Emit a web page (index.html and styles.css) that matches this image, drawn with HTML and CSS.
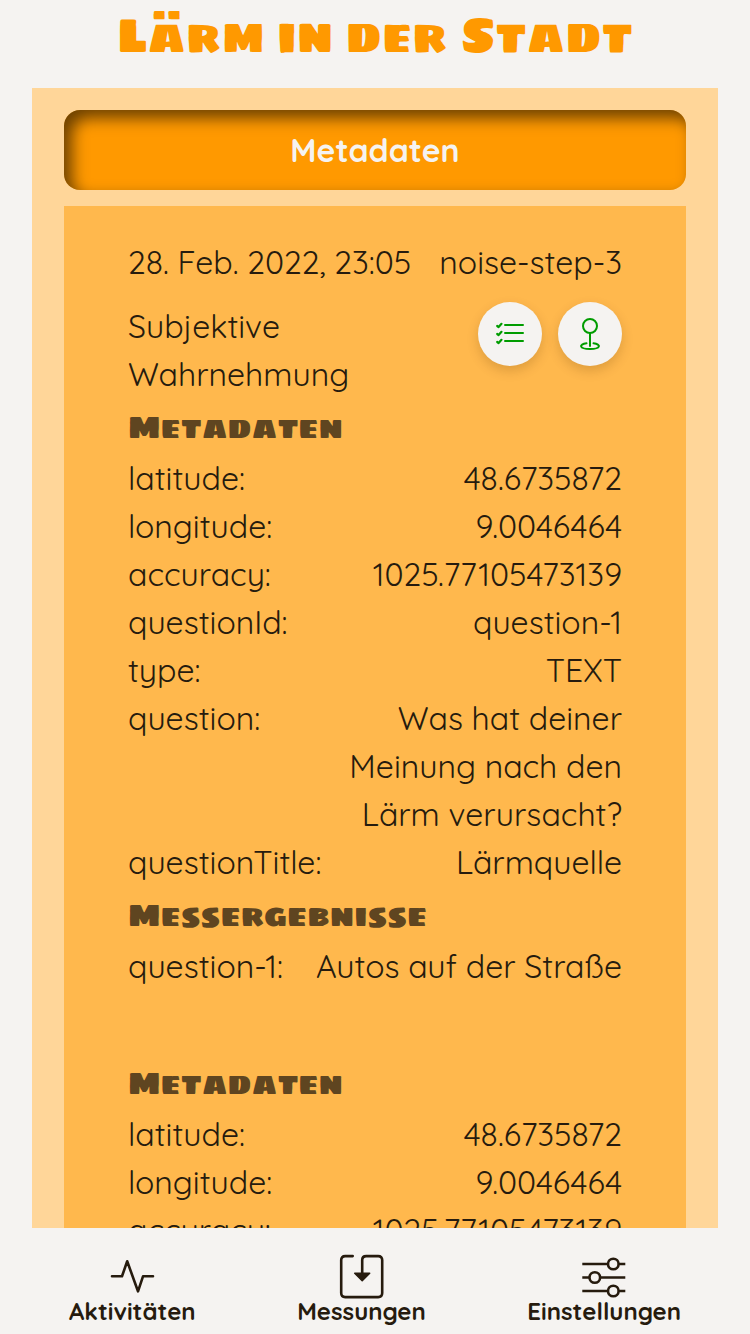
FILE: index.html
```html
<!DOCTYPE html>
<html lang="de">
<head>
<meta charset="utf-8">
<title>Lärm in der Stadt</title>
<link rel="stylesheet" href="styles.css">
</head>
<body>
<div class="app">
  <header class="header"><h1 class="title">Lärm in der Stadt</h1></header>
  <main class="card">
    <button class="banner">Metadaten</button>
    <section class="panel">
      <div class="row"><span>28. Feb. 2022, 23:05</span><span>noise-step-3</span></div>
      <div class="row summary">
        <div class="lines"><span>Subjektive</span><span>Wahrnehmung</span></div>
        <div class="actions">
          <button class="round" aria-label="Liste"><svg viewBox="0 0 64 64"><path d="M27 23h18M27 31h18M27 39h18"/><path class="check" d="M19.200 24l1.400 1 2.900-3.200M19.200 32l1.400 1 2.900-3.200M19.200 40l1.400 1 2.900-3.200"/></svg></button>
          <button class="round" aria-label="Standort"><svg viewBox="0 0 64 64"><circle cx="32" cy="24" r="7"/><path d="M32 31v13M28.500 41.300c-8 .9-7.500 5.700 3.500 5.700s11.500-4.800 3.500-5.700"/></svg></button>
        </div>
      </div>
      <h3 class="subhead">Metadaten</h3>
      <div class="row"><span>latitude:</span><span>48.6735872</span></div>
      <div class="row"><span>longitude:</span><span>9.0046464</span></div>
      <div class="row"><span>accuracy:</span><span>1025.77105473139</span></div>
      <div class="row"><span>questionId:</span><span>question-1</span></div>
      <div class="row"><span>type:</span><span>TEXT</span></div>
      <div class="row"><span>question:</span><div class="lines end"><span>Was hat deiner</span><span>Meinung nach den</span><span>Lärm verursacht?</span></div></div>
      <div class="row"><span>questionTitle:</span><span>Lärmquelle</span></div>
      <h3 class="subhead">Messergebnisse</h3>
      <div class="row"><span>question-1:</span><span>Autos auf der Straße</span></div>
      <h3 class="subhead next">Metadaten</h3>
      <div class="row"><span>latitude:</span><span>48.6735872</span></div>
      <div class="row"><span>longitude:</span><span>9.0046464</span></div>
      <div class="row"><span>accuracy:</span><span>1025.77105473139</span></div>
    </section>
  </main>
  <nav class="nav">
    <a class="tab"><svg viewBox="0 0 48 48"><path d="M4 24.300h10l5.200-15 10.800 30 5-15h10"/></svg><span>Aktivitäten</span></a>
    <a class="tab"><svg viewBox="0.8 0.2 48 48"><path d="M15.500 4.300H8q-4 0-4 4v33q0 4 4 4h33q4 0 4-4v-33q0-4-4-4H29q-4 0-4 4V22"/><path class="solid" d="M17.500 21.500h15l-7.500 7.500z"/></svg><span>Messungen</span></a>
    <a class="tab"><svg viewBox="0.2 0 48 48"><path class="flat" d="M2.500 12h25.500M39 12h6.500M2.500 25.500h7M20.500 25.500h25M2.500 39h25.500M39 39h6.500"/><circle cx="33.500" cy="12" r="5.300"/><circle cx="15" cy="25.500" r="5.300"/><circle cx="33.500" cy="39" r="5.300"/></svg><span>Einstellungen</span></a>
  </nav>
</div>
</body>
</html>
```

FILE: styles.css
```css
* { box-sizing: border-box; }

body {
  margin: 0;
  background: #f5f3f1;
  color: #261b0e;
  font: 400 32px/48px Quicksand, Lato, "Open Sans", sans-serif;
}

.app {
  display: flex;
  flex-direction: column;
  height: 1334px;
  overflow: hidden;
}

.header {
  flex: none;
  height: 88px;
  padding-top: 3px;
  text-align: center;
}

.title,
.subhead {
  margin: 0;
  font-family: "Sigmar One", "Bowlby One SC", "DejaVu Sans", sans-serif;
  font-weight: 400;
}

.title {
  color: #ff9900;
  font-size: 48px;
  line-height: 64px;
  white-space: nowrap;
}

.card {
  flex: 1;
  min-height: 0;
  margin: 0 32px;
  padding: 22px 32px 0;
  overflow: hidden;
  background: #ffd699;
}

button {
  border: 0;
  padding: 0;
  font: inherit;
}

.banner {
  display: block;
  width: 100%;
  height: 80px;
  border-radius: 16px;
  background: #ff9900;
  box-shadow: inset 8px 8px 16px rgba(0, 0, 0, 0.58);
  color: #f5f3f1;
  font-weight: 700;
}

.panel {
  margin-top: 16px;
  padding: 32px 64px;
  background: #ffb84d;
}

.row {
  display: flex;
  justify-content: space-between;
  white-space: nowrap;
}

.summary { padding-top: 16px; }

.lines {
  display: flex;
  flex-direction: column;
  align-items: flex-start;
}

.end { align-items: flex-end; }

.actions {
  display: flex;
  gap: 16px;
}

.round {
  width: 64px;
  height: 64px;
  border-radius: 50%;
  background: #f5f3f1;
  box-shadow: 0 5px 12px rgba(90, 50, 0, 0.2);
}

.round svg {
  display: block;
  stroke: #009c00;
}

svg {
  fill: none;
  stroke: #261b0e;
  stroke-width: 2;
  stroke-linecap: round;
  stroke-linejoin: round;
}

.round .check { stroke-width: 2.2; }

.subhead {
  height: 56px;
  padding-top: 1px;
  color: #5f4520;
  font-size: 32px;
  line-height: 56px;
}

.next { margin-top: 64px; }

.nav {
  flex: none;
  display: flex;
  justify-content: space-between;
  height: 106px;
  padding: 24px 69px 0;
}

.tab {
  display: flex;
  flex-direction: column;
  align-items: center;
  font-size: 24px;
  font-weight: 700;
  line-height: 22px;
}

.tab svg {
  width: 48px;
  height: 48px;
  stroke-width: 2.6;
}

.tab .solid { fill: #261b0e; stroke-width: 1.5; }
.tab .flat { stroke-linecap: butt; }
```
